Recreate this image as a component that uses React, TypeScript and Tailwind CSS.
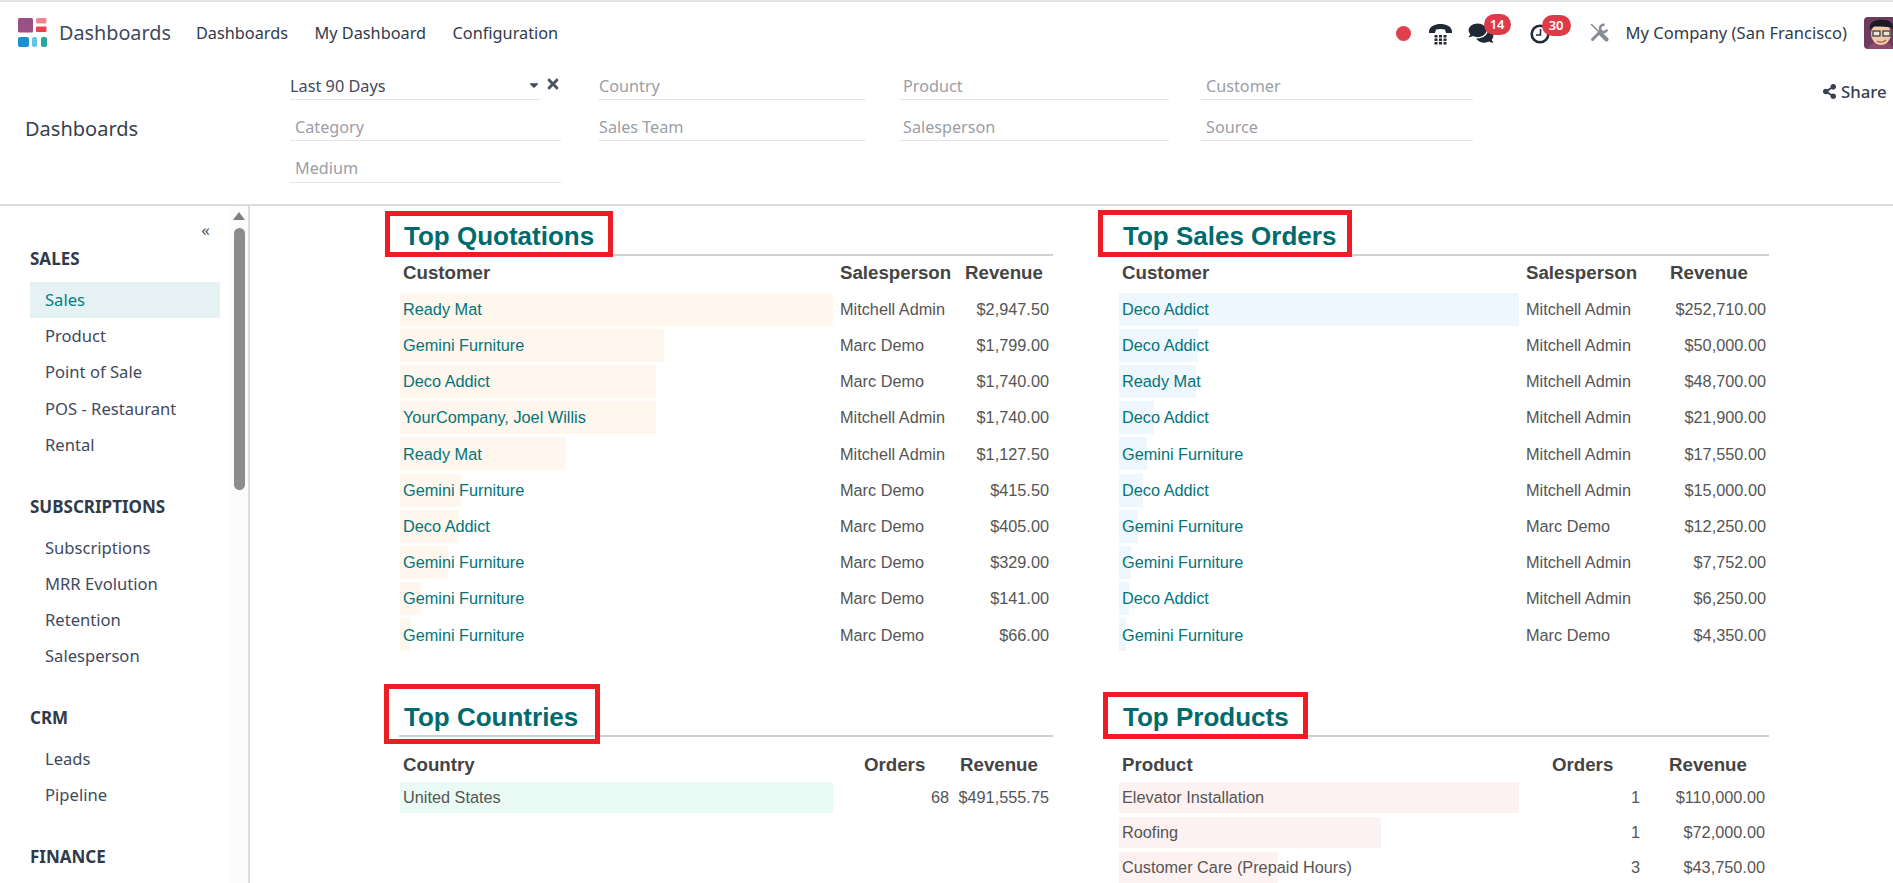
import { FaComments, FaShareAlt, FaTimes, FaCaretDown } from 'react-icons/fa'

type Row = { name: string; mid: string; rev: string; value: number }

const quotations: Row[] = [
  { name: 'Ready Mat', mid: 'Mitchell Admin', rev: '$2,947.50', value: 2947.5 },
  { name: 'Gemini Furniture', mid: 'Marc Demo', rev: '$1,799.00', value: 1799 },
  { name: 'Deco Addict', mid: 'Marc Demo', rev: '$1,740.00', value: 1740 },
  { name: 'YourCompany, Joel Willis', mid: 'Mitchell Admin', rev: '$1,740.00', value: 1740 },
  { name: 'Ready Mat', mid: 'Mitchell Admin', rev: '$1,127.50', value: 1127.5 },
  { name: 'Gemini Furniture', mid: 'Marc Demo', rev: '$415.50', value: 415.5 },
  { name: 'Deco Addict', mid: 'Marc Demo', rev: '$405.00', value: 405 },
  { name: 'Gemini Furniture', mid: 'Marc Demo', rev: '$329.00', value: 329 },
  { name: 'Gemini Furniture', mid: 'Marc Demo', rev: '$141.00', value: 141 },
  { name: 'Gemini Furniture', mid: 'Marc Demo', rev: '$66.00', value: 66 },
]

const orders: Row[] = [
  { name: 'Deco Addict', mid: 'Mitchell Admin', rev: '$252,710.00', value: 252710 },
  { name: 'Deco Addict', mid: 'Mitchell Admin', rev: '$50,000.00', value: 50000 },
  { name: 'Ready Mat', mid: 'Mitchell Admin', rev: '$48,700.00', value: 48700 },
  { name: 'Deco Addict', mid: 'Mitchell Admin', rev: '$21,900.00', value: 21900 },
  { name: 'Gemini Furniture', mid: 'Mitchell Admin', rev: '$17,550.00', value: 17550 },
  { name: 'Deco Addict', mid: 'Mitchell Admin', rev: '$15,000.00', value: 15000 },
  { name: 'Gemini Furniture', mid: 'Marc Demo', rev: '$12,250.00', value: 12250 },
  { name: 'Gemini Furniture', mid: 'Mitchell Admin', rev: '$7,752.00', value: 7752 },
  { name: 'Deco Addict', mid: 'Mitchell Admin', rev: '$6,250.00', value: 6250 },
  { name: 'Gemini Furniture', mid: 'Marc Demo', rev: '$4,350.00', value: 4350 },
]

const countries: Row[] = [{ name: 'United States', mid: '68', rev: '$491,555.75', value: 491555.75 }]

const products: Row[] = [
  { name: 'Elevator Installation', mid: '1', rev: '$110,000.00', value: 110000 },
  { name: 'Roofing', mid: '1', rev: '$72,000.00', value: 72000 },
  { name: 'Customer Care (Prepaid Hours)', mid: '3', rev: '$43,750.00', value: 43750 },
]

const menu = [
  { title: 'SALES', items: ['Sales', 'Product', 'Point of Sale', 'POS - Restaurant', 'Rental'] },
  { title: 'SUBSCRIPTIONS', items: ['Subscriptions', 'MRR Evolution', 'Retention', 'Salesperson'] },
  { title: 'CRM', items: ['Leads', 'Pipeline'] },
  { title: 'FINANCE', items: [] as string[] },
]

function Logo() {
  return (
    <svg width="30" height="30" viewBox="0 0 30 30" className="shrink-0">
      <rect x="0" y="0" width="15" height="14.5" rx="1.5" fill="#9a4f85" />
      <rect x="18" y="0" width="10.5" height="5.5" rx="1.5" fill="#f0838b" />
      <rect x="18" y="8.5" width="10.5" height="5.5" rx="1" fill="#e8434b" />
      <rect x="0" y="19" width="11" height="10" rx="2" fill="#1a8fd1" />
      <rect x="14" y="19" width="5" height="10" rx="2" fill="#5fc6e8" />
      <rect x="23" y="19" width="6" height="10" rx="2" fill="#2aa79c" />
    </svg>
  )
}

function PhoneIcon() {
  return (
    <svg width="23" height="21" viewBox="0 0 23 21">
      <path d="M0 7 C1 2 6 0 11.5 0 C17 0 22 2 23 7 L23 9 L17 9 L16 5.5 C13.5 4.7 9.5 4.7 7 5.500 L6 9 L0 9 Z" fill="#1f2a36" />
      <g fill="#1f2a36">
        <rect x="5.500" y="11" width="3" height="2.500" />
        <rect x="10" y="11" width="3" height="2.500" />
        <rect x="14.500" y="11" width="3" height="2.500" />
        <rect x="5.500" y="14.500" width="3" height="2.500" />
        <rect x="10" y="14.500" width="3" height="2.500" />
        <rect x="14.500" y="14.500" width="3" height="2.500" />
        <rect x="5.500" y="18" width="3" height="2.500" />
        <rect x="10" y="18" width="3" height="2.500" />
        <rect x="14.500" y="18" width="3" height="2.500" />
      </g>
    </svg>
  )
}

function ClockIcon() {
  return (
    <svg width="20" height="20" viewBox="0 0 20 20">
      <circle cx="10" cy="10" r="8.300" fill="none" stroke="#1f2a36" strokeWidth="2.600" />
      <path d="M10.500 5 V11 H6" fill="none" stroke="#1f2a36" strokeWidth="1.500" />
    </svg>
  )
}

function ToolsIcon() {
  return (
    <svg width="19" height="19" viewBox="0 0 19 19" className="mt-[-2px]">
      <g fill="none" stroke="#868c92" strokeLinecap="round">
        <path d="M1.500 1.500 L9 9" strokeWidth="1.500" />
        <path d="M10 10 L16.500 16.500" strokeWidth="4" />
        <path d="M2.500 16.500 L10.500 8.500" strokeWidth="3" />
        <path d="M14.500 2 A3.600 3.600 0 1 0 17 6.500" strokeWidth="2.600" strokeLinecap="butt" />
      </g>
    </svg>
  )
}

function Avatar() {
  return (
    <svg width="32" height="32" viewBox="0 0 32 32" className="rounded-[4px] shrink-0">
      <rect width="32" height="32" fill="#6d3b60" />
      <path d="M4 32 C5 26 10 25 16 25 C22 25 28 26 29 32 Z" fill="#8d4a6d" />
      <ellipse cx="17" cy="17" rx="10" ry="11" fill="#f0c9a8" />
      <path d="M6 13 C4 5 12 2 20 3 C26 3 30 7 29 13 L27 10 C20 10 12 9 9 10 Z" fill="#1a1a22" />
      <rect x="9" y="14" width="7" height="5" fill="#e9e4df" stroke="#33333b" strokeWidth="1.200" />
      <rect x="19" y="14" width="7" height="5" fill="#e9e4df" stroke="#33333b" strokeWidth="1.200" />
      <path d="M13 24 C16 26 20 25 22 23" fill="none" stroke="#a0604f" strokeWidth="1.200" />
    </svg>
  )
}

function Navbar() {
  return (
    <div className="flex h-[58px] items-center border-t-2 border-[#e3e3e3] pl-[18px] pt-[6px] text-[#374151]">
      <Logo />
      <span className="ml-[11px] text-[19.800px] text-[#3f4a5c]">Dashboards</span>
      <nav className="ml-[25px] flex gap-[26.500px] text-[16.300px] text-[#2f3a4a]">
        <span>Dashboards</span>
        <span>My Dashboard</span>
        <span>Configuration</span>
      </nav>
      <div className="ml-auto flex items-center">
        <span className="h-[15px] w-[15px] rounded-full bg-[#e0404c]" />
        <span className="ml-[18px] mt-[2px]">
          <PhoneIcon />
        </span>
        <span className="relative ml-[16px] w-[62px]">
          <FaComments className="h-[22px] w-[26px] text-[#1f2a36]" />
          <span className="absolute left-[16px] top-[-8px] flex h-[21px] w-[27px] items-center justify-center rounded-full bg-[#de3a48] text-[13px] font-semibold text-white">
            14
          </span>
        </span>
        <span className="relative mt-[2px] w-[60px]">
          <ClockIcon />
          <span className="absolute left-[12px] top-[-9px] flex h-[21px] w-[29px] items-center justify-center rounded-full bg-[#de3a48] text-[13px] font-semibold text-white">
            30
          </span>
        </span>
        <ToolsIcon />
        <span className="ml-[17px] text-[16.550px] text-[#2f3a4a]">My Company (San Francisco)</span>
        <span className="ml-[17px] mr-[-3px]">
          <Avatar />
        </span>
      </div>
    </div>
  )
}

function Field({ label, width, pad }: { label: string; width: string; pad: string }) {
  return (
    <div className={`flex h-[41px] items-end border-b border-[#e4e4e4] pb-[1px] text-[16.200px] text-[#9a9ea6] ${width} ${pad}`}>
      {label}
    </div>
  )
}

function FilterBar() {
  return (
    <div className="relative flex h-[148px] border-b-2 border-[#dcdcdc] pt-[1px]">
      <div className="w-[290px] pl-[25px] pt-[55px] text-[20px] text-[#374151]">Dashboards</div>
      <div className="grid grid-cols-[308px_302px_301px_272px] grid-rows-[41px_42px_41px]">
        <div className="flex h-[41px] w-[271px] items-end">
          <div className="flex h-[26px] w-[250px] items-center border-b border-[#e4e4e4] pb-[1px] text-[16.300px] text-[#3f4a5c]">
            Last 90 Days
            <FaCaretDown className="ml-auto mr-[-1px] mt-[-3px] h-[14px] w-[14px] text-[#3f4a5c]" />
          </div>
          <FaTimes className="mb-[8px] ml-[5px] h-[16px] w-[16px] text-[#4b5563]" />
        </div>
        <Field label="Country" width="w-[268px]" pad="pl-[1px]" />
        <Field label="Product" width="w-[269px]" pad="pl-[3px]" />
        <Field label="Customer" width="w-[272px]" pad="pl-[5px]" />
        <Field label="Category" width="w-[271px]" pad="pl-[5px]" />
        <Field label="Sales Team" width="w-[268px]" pad="pl-[1px]" />
        <Field label="Salesperson" width="w-[269px]" pad="pl-[3px]" />
        <Field label="Source" width="w-[272px]" pad="pl-[5px]" />
        <Field label="Medium" width="w-[271px]" pad="pb-[2px] pl-[5px]" />
      </div>
      <div className="absolute left-[1822px] top-[21px] flex items-center gap-[4px] text-[16.800px] font-medium text-[#374151]">
        <FaShareAlt className="h-[15px] w-[15px]" />
        Share
      </div>
    </div>
  )
}

function Sidebar() {
  return (
    <aside className="relative flex h-full w-[250px] shrink-0 border-r-2 border-[#dcdcdc]">
      <div className="w-[230px] pl-[30px] pr-[10px]">
        <div className="flex h-[36px] items-end justify-end pr-[10px] text-[17px] leading-[24px] text-[#4b5563]">«</div>
        {menu.map((group) => (
          <div key={group.title} className="mb-[26.400px]">
            <div className="flex h-[33px] items-center text-[17px] font-bold text-[#2f3a4a]">{group.title}</div>
            <ul className="mt-[7px]">
              {group.items.map((item) => (
                <li
                  key={item}
                  className={
                    item === 'Sales'
                      ? 'flex h-[36.300px] items-center bg-[#e6f1f3] pl-[15px] text-[16.600px] text-[#017e84]'
                      : 'flex h-[36.300px] items-center pl-[15px] text-[16.600px] text-[#3f4a5c]'
                  }
                >
                  {item}
                </li>
              ))}
            </ul>
          </div>
        ))}
      </div>
      <div className="flex w-[18px] flex-col items-center bg-[#fbfbfb] pt-[6px]">
        <div className="h-0 w-0 border-x-[6px] border-b-[8px] border-x-transparent border-b-[#7f7f7f]" />
        <div className="mt-[8px] h-[262px] w-[11px] rounded-full bg-[#8c8c8c]" />
      </div>
    </aside>
  )
}

type TableProps = {
  title: string
  rows: Row[]
  heads: string[]
  box: string
  heading: string
  cols: string
  lastHead: string
  bar: string
  maxBar: number
  rowHeight: string
  barHeight: string
  teal: boolean
  headRow: string
}

function Table(p: TableProps) {
  const max = Math.max(...p.rows.map((r) => r.value))
  return (
    <section>
      <div className={`relative flex items-end border-b-2 border-[#cfcfcf] pl-[5px] ${p.heading}`}>
        <h2 className="font-['Liberation_Sans',Arial,sans-serif] text-[26px] font-bold leading-[30px] text-[#016a6c]">
          {p.title}
        </h2>
        <div className={`absolute border-[5px] border-[#ee1c25] ${p.box}`} />
      </div>
      <div className={`grid items-center font-['Liberation_Sans',Arial,sans-serif] text-[18.700px] font-bold text-[#444444] ${p.cols} ${p.headRow}`}>
        <span className="pl-[4px]">{p.heads[0]}</span>
        <span>{p.heads[1]}</span>
        <span className={p.lastHead}>{p.heads[2]}</span>
      </div>
      {p.rows.map((r, i) => (
        <div
          key={i}
          className={`grid items-center font-['Liberation_Sans',Arial,sans-serif] text-[16.300px] text-[#555555] ${p.cols} ${p.rowHeight}`}
        >
          <div className="relative flex h-full items-center pl-[4px]">
            <div
              className={`absolute left-[1px] ${p.barHeight} ${p.bar}`}
              style={{ width: (r.value / max) * p.maxBar }}
            />
            <span className={p.teal ? 'relative text-[#017579]' : 'relative'}>{r.name}</span>
          </div>
          <span className={p.heads[1] === 'Salesperson' ? '' : 'text-right'}>{r.mid}</span>
          <span className="text-right">{r.rev}</span>
        </div>
      ))}
    </section>
  )
}

export default function App() {
  return (
    <div className="flex h-[883px] w-[1893px] flex-col overflow-hidden bg-white font-['Noto_Sans',sans-serif]">
      <Navbar />
      <FilterBar />
      <div className="flex min-h-0 flex-1">
        <Sidebar />
        <main className="flex-1 pl-[149px]">
          <div className="grid grid-cols-[654px_651px] gap-x-[65px]">
            <div className="h-[478px]">
              <Table
                title="Top Quotations"
                rows={quotations}
                heads={['Customer', 'Salesperson', 'Revenue']}
                box="left-[-14px] top-[5px] h-[46px] w-[228px]"
                heading="h-[50px] pb-[3px]"
                cols="grid-cols-[441px_125px_84px]"
                lastHead=""
                bar="bg-[#fff6ee]"
                maxBar={433}
                rowHeight="h-[36.200px]"
                barHeight="h-[33px]"
                teal
                headRow="h-[35px] pb-[1px]"
              />
            </div>
            <div className="h-[478px]">
              <Table
                title="Top Sales Orders"
                rows={orders}
                heads={['Customer', 'Salesperson', 'Revenue']}
                box="left-[-20px] top-[4px] h-[47px] w-[254px]"
                heading="h-[50px] pb-[3px]"
                cols="grid-cols-[408px_144px_96px]"
                lastHead=""
                bar="bg-[#eff7fe]"
                maxBar={400}
                rowHeight="h-[36.200px]"
                barHeight="h-[33px]"
                teal
                headRow="h-[35px] pb-[1px]"
              />
            </div>
            <Table
              title="Top Countries"
              rows={countries}
              heads={['Country', 'Orders', 'Revenue']}
              box="left-[-15px] top-[0px] h-[60px] w-[216px]"
              heading="h-[53px] pb-[3px]"
              cols="grid-cols-[465px_85px_100px]"
              lastHead="pl-[11px]"
              bar="bg-[#e9fbf4]"
              maxBar={433}
              rowHeight="h-[35px]"
              barHeight="h-[31px]"
              teal={false}
              headRow="h-[42.500px] pt-[13px]"
            />
            <Table
              title="Top Products"
              rows={products}
              heads={['Product', 'Orders', 'Revenue']}
              box="left-[-15px] top-[8px] h-[47px] w-[205px]"
              heading="h-[53px] pb-[3px]"
              cols="grid-cols-[434px_88px_125px]"
              lastHead="pl-[29px]"
              bar="bg-[#fef1f1]"
              maxBar={400}
              rowHeight="h-[35px]"
              barHeight="h-[31px]"
              teal={false}
              headRow="h-[42.500px] pt-[13px]"
            />
          </div>
        </main>
      </div>
    </div>
  )
}
